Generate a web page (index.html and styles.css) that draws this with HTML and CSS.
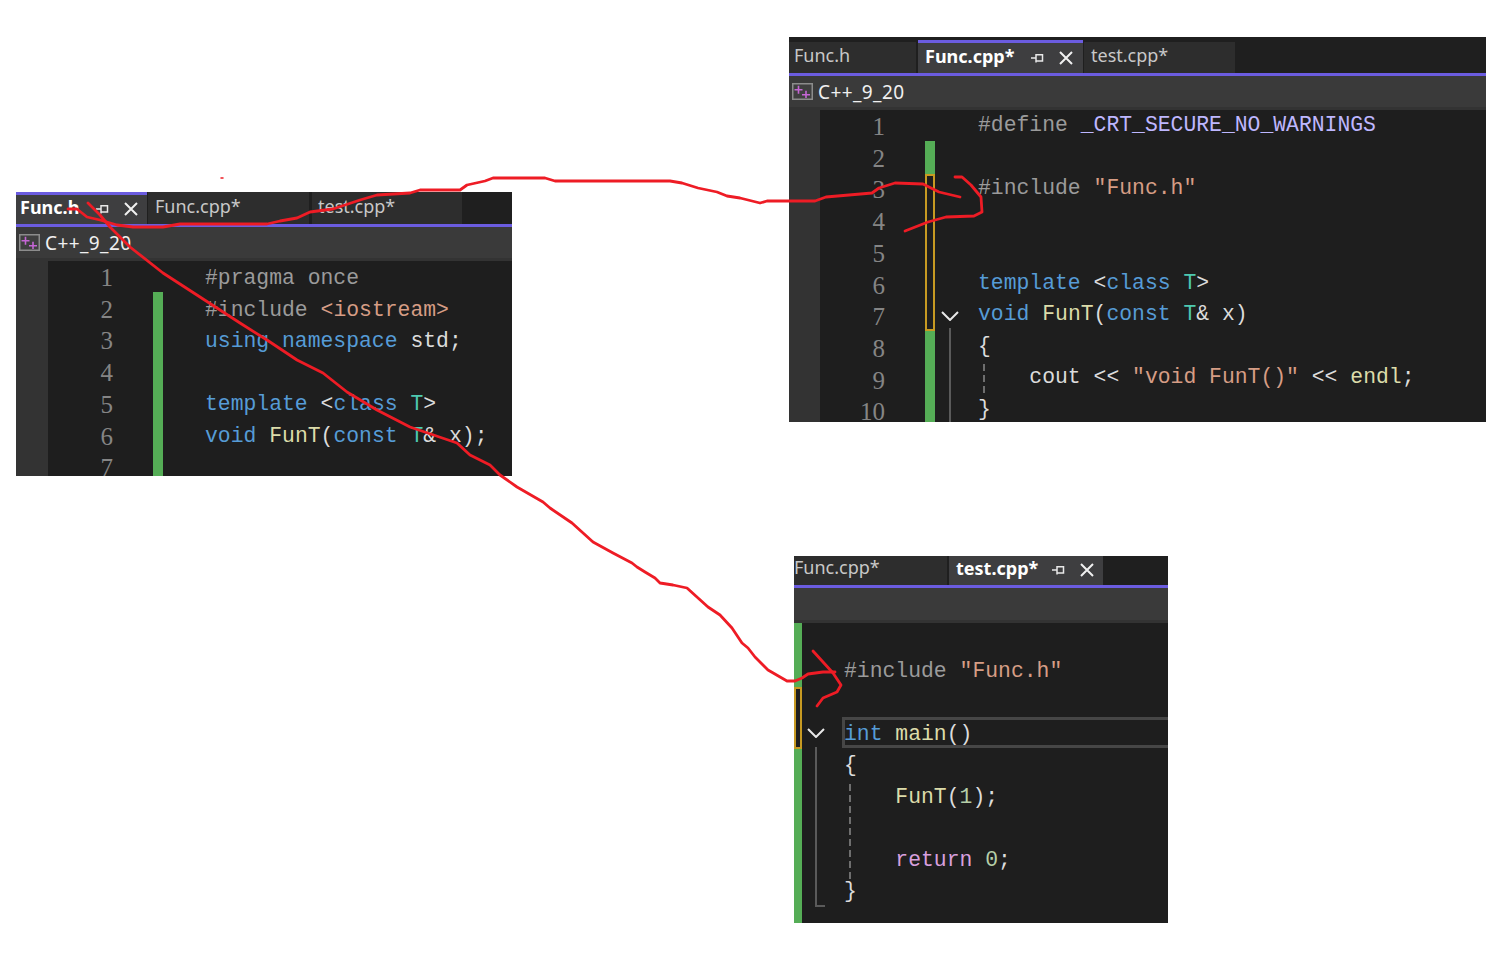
FILE: index.html
```html
<!DOCTYPE html>
<html lang="en">
<head>
<meta charset="utf-8">
<title>C++ template declaration and definition across files</title>
<link rel="stylesheet" href="styles.css">
</head>
<body>
<main class="canvas">

<section class="win win-a">
  <div class="tabs">
    <div class="tab active tab-a1"><span class="name">Func.h</span><span class="tab-icons">
      <svg class="pin" viewBox="0 0 13 10"><path d="M0 5H5M5 1V9.5M5 1.8H11.5V8H5"/></svg>
      <svg class="close" viewBox="0 0 14 14"><path d="M1 1L13 13M13 1L1 13"/></svg></span></div>
    <div class="tab tab-a2"><span class="name">Func.cpp*</span></div>
    <div class="tab tab-a3"><span class="name">test.cpp*</span></div>
  </div>
  <div class="nav"><svg class="proj" viewBox="0 0 21 17"><rect x="0.75" y="0.75" width="19.5" height="15.5"/><path class="plus" d="M6.5 2.7V10.7M2.5 6.7H10.5M14 7.7V15M10 11.7H18"/></svg><span class="proj-name">C++_9_20</span></div>
  <div class="editor">
    <div class="margin"></div>
    <div class="nums nums-a"><div>1</div><div>2</div><div>3</div><div>4</div><div>5</div><div>6</div><div>7</div></div>
    <div class="change change-a"><div class="green grow"></div></div>
    <div class="fold fold-a"></div>
    <pre class="code code-a"><span class="pp">#pragma once</span>
<span class="pp">#include</span> <span class="str">&lt;iostream&gt;</span>
<span class="kw">using namespace</span> <span class="tx">std;</span>

<span class="kw">template</span> <span class="tx">&lt;</span><span class="kw">class</span> <span class="ty">T</span><span class="tx">&gt;</span>
<span class="kw">void</span> <span class="fn">FunT</span><span class="tx">(</span><span class="kw">const</span> <span class="ty">T</span><span class="tx">&amp;</span> <span class="tx">x);</span></pre>
  </div>
</section>

<section class="win win-b">
  <div class="tabs">
    <div class="tab tab-b1"><span class="name">Func.h</span></div>
    <div class="tab active tab-b2"><span class="name">Func.cpp*</span><span class="tab-icons">
      <svg class="pin" viewBox="0 0 13 10"><path d="M0 5H5M5 1V9.5M5 1.8H11.5V8H5"/></svg>
      <svg class="close" viewBox="0 0 14 14"><path d="M1 1L13 13M13 1L1 13"/></svg></span></div>
    <div class="tab tab-b3"><span class="name">test.cpp*</span></div>
  </div>
  <div class="nav"><svg class="proj" viewBox="0 0 21 17"><rect x="0.75" y="0.75" width="19.5" height="15.5"/><path class="plus" d="M6.5 2.7V10.7M2.5 6.7H10.5M14 7.7V15M10 11.7H18"/></svg><span class="proj-name">C++_9_20</span></div>
  <div class="editor">
    <div class="margin"></div>
    <div class="nums nums-b"><div>1</div><div>2</div><div>3</div><div>4</div><div>5</div><div>6</div><div>7</div><div>8</div><div>9</div><div>10</div></div>
    <div class="change change-b"><div class="green seg-b1"></div><div class="saved seg-b2"></div><div class="green grow"></div></div>
    <div class="fold fold-b">
      <svg class="chev chev-b" viewBox="0 0 18 10"><path d="M1 1L9 9L17 1"/></svg>
      <div class="fold-line fold-line-b"></div>
      <div class="guide guide-b"></div>
    </div>
    <pre class="code code-b"><span class="pp">#define</span> <span class="mc">_CRT_SECURE_NO_WARNINGS</span>

<span class="pp">#include</span> <span class="str">"Func.h"</span>


<span class="kw">template</span> <span class="tx">&lt;</span><span class="kw">class</span> <span class="ty">T</span><span class="tx">&gt;</span>
<span class="kw">void</span> <span class="fn">FunT</span><span class="tx">(</span><span class="kw">const</span> <span class="ty">T</span><span class="tx">&amp;</span> <span class="tx">x)</span>
<span class="tx">{</span>
    <span class="tx">cout &lt;&lt;</span> <span class="str">"void FunT()"</span> <span class="tx">&lt;&lt;</span> <span class="fn">endl</span><span class="tx">;</span>
<span class="tx">}</span></pre>
  </div>
</section>

<section class="win win-c">
  <div class="tabs">
    <div class="tab tab-c1"><span class="name">Func.cpp*</span></div>
    <div class="tab active tab-c2"><span class="name">test.cpp*</span><span class="tab-icons">
      <svg class="pin" viewBox="0 0 13 10"><path d="M0 5H5M5 1V9.5M5 1.8H11.5V8H5"/></svg>
      <svg class="close" viewBox="0 0 14 14"><path d="M1 1L13 13M13 1L1 13"/></svg></span></div>
  </div>
  <div class="nav"></div>
  <div class="editor">
    <div class="change change-c"><div class="green seg-c1"></div><div class="saved seg-c2"></div><div class="green grow"></div></div>
    <div class="fold fold-c">
      <svg class="chev chev-c" viewBox="0 0 18 10"><path d="M1 1L9 9L17 1"/></svg>
      <div class="fold-line fold-line-c"></div>
      <div class="guide guide-c"></div>
    </div>
    <div class="current"></div>
    <pre class="code code-c">

<span class="pp">#include</span> <span class="str">"Func.h"</span>

<span class="kw">int</span> <span class="fn">main</span><span class="tx">()</span>
<span class="tx">{</span>
    <span class="fn">FunT</span><span class="tx">(</span><span class="num">1</span><span class="tx">);</span>

    <span class="ctl">return</span> <span class="num">0</span><span class="tx">;</span>
<span class="tx">}</span></pre>
  </div>
</section>

<svg class="ink" viewBox="0 0 1509 970">
  <path d="M68 209L77 209L87 217L100 220L117 225L133 227L163 227L180 224L267 224L280 221L297 218L310 212L333 209L360 200L377 195L410 193L420 190L460 190L467 185L485 181L493 178L545 178L555 181L670 181L682 183L698 188L717 192L727 196L740 198L760 203L767 201L815 201L826 197L872 193L879 188L895 183L923 184L939 192L960 197"/>
  <path d="M955 177L962 177L971 185L981 197L982 212L974 216L946 217L928 222L905 231"/>
  <path d="M88 203L100 215L110 227L130 247L163 273L200 297L240 323L267 340L297 360L323 373L347 392L377 410L410 427L457 443L470 455L490 465L500 475L517 487L543 502L550 508L572 523L593 542L613 553L632 563L637 567L645 572L655 578L660 583L673 585L687 588L708 607L720 615L732 628L742 643L748 648L755 657L768 670L787 681L795 681L802 678L808 674L823 672L835 672"/>
  <path d="M813 651L823 662L833 673L841 685L837 692L823 698L817 706"/>
  <path class="dot" d="M221 178H223"/>
</svg>

</main>
</body>
</html>
```

FILE: styles.css
```css
* { box-sizing: border-box; }
html, body { margin: 0; padding: 0; background: #fff; }
.canvas { position: relative; width: 1509px; height: 970px; overflow: hidden; }

.win { position: absolute; display: flex; flex-direction: column; overflow: hidden; background: #1e1e1e; }
.win-a { left: 16px; top: 192px; width: 496px; height: 284px; }
.win-b { left: 789px; top: 37px; width: 697px; height: 385px; }
.win-c { left: 794px; top: 556px; width: 374px; height: 367px; }

.tabs { display: flex; align-items: flex-end; background: #1f1f1f; border-bottom: 3px solid #6b5ce0; flex: none; }
.win-a .tabs { height: 35px; }
.win-b .tabs { height: 39px; }
.win-c .tabs { height: 32px; }

.tab { height: 100%; display: flex; align-items: center; color: #c8c8c8; background: #2d2d2d; font: 18px/1 "Noto Sans", "Open Sans", sans-serif; flex: none; margin-right: 3px; white-space: nowrap; }
.win-b .tab { height: 31px; }
.tab.active { background: #3e3e40; color: #fff; font-weight: 700; border-top: 3px solid #6b5ce0; }
.win-c .tab.active { border-top: 0; }
.tab-icons { display: flex; align-items: center; margin-left: auto; }
.pin { width: 13px; height: 10px; flex: none; fill: none; stroke: #e8e8e8; stroke-width: 1.5; }
.close { width: 14px; height: 14px; flex: none; margin-left: 15px; fill: none; stroke: #f0f0f0; stroke-width: 2; }

.tab-a1 { width: 131px; padding: 0 9px 5px 4px; margin-right: 1px; }
.tab-a1 .tab-icons { margin-bottom: -4px; }
.tab-a2 { width: 161px; padding: 0 0 4px 7px; }
.tab-a3 { width: 150px; padding: 0 0 4px 6px; }
.tab-b1 { width: 127px; padding: 0 0 5px 5px; margin-right: 2px; }
.win-b .tab-b2 { width: 165px; height: 33px; padding: 0 10px 4px 7px; margin-right: 1px; }
.tab-b2 .tab-icons { margin-bottom: -4px; }
.tab-b3 { width: 151px; padding: 0 0 5px 7px; }
.tab-c1 { width: 153px; padding: 0 0 7px 0; margin-right: 2px; }
.tab-c2 { width: 154px; padding: 0 9px 5px 7px; }
.tab-c2 .tab-icons { margin-bottom: -3px; }

.nav { flex: none; height: 34px; background: #3a3a3a; border-bottom: 3px solid #333; display: flex; align-items: center; padding: 0 0 0 3px; color: #f0f0f0; }
.win-c .nav { height: 35px; }
.proj { width: 21px; height: 17px; flex: none; }
.proj rect { fill: #3f3f3f; stroke: #8c8c8c; stroke-width: 1.5; }
.plus { fill: none; stroke: #c566d5; stroke-width: 1.6; }
.proj-name { margin-left: 5px; padding-top: 2px; font: 19px/1 "Noto Sans", sans-serif; letter-spacing: .4px; }

.editor { position: relative; flex: 1; display: flex; min-height: 0; overflow: hidden; font: 21.4px/31.5px "Liberation Mono", "DejaVu Sans Mono", monospace; }
.margin { flex: none; width: 32px; background: #333; }
.win-b .margin { width: 31px; }

.nums { flex: none; text-align: right; color: #858585; padding-top: 1px; font: 25px/31.7px "Liberation Serif", serif; }
.nums-a { width: 65px; height: 230px; }
.nums-b { width: 65px; }

.change { flex: none; display: flex; flex-direction: column; }
.change-a { width: 10px; margin-left: 40px; padding-top: 31px; }
.change-b { width: 10px; margin-left: 40px; padding-top: 31px; }
.change-c { width: 8px; }
.green { background: #55ad56; }
.grow { flex: 1; }
.saved { border: 2px solid #c79a22; background: #1e1e1e; }
.seg-b1 { height: 33px; }
.seg-b2 { height: 157px; }
.seg-c1 { height: 64px; }
.seg-c2 { height: 62px; }

.fold { flex: none; position: relative; }
.fold-a { width: 42px; }
.fold-b { width: 43px; }
.fold-c { width: 42px; }
.chev { position: absolute; width: 18px; height: 10px; fill: none; stroke: #e8e8e8; stroke-width: 2; }
.chev-b { left: 6px; top: 201px; }
.chev-c { left: 5px; top: 105px; }
.fold-line { position: absolute; width: 2px; background: #5a5a5a; }
.fold-line-b { left: 14px; top: 218px; bottom: 0; }
.fold-line-c { left: 13px; top: 124px; height: 160px; }
.fold-line-c::after { content: ""; position: absolute; left: 0; bottom: 0; width: 10px; height: 2px; background: #5a5a5a; }
.guide { position: absolute; width: 2px; background: repeating-linear-gradient(to bottom, #6e6e6e 0 7px, transparent 7px 11px); }
.guide-b { left: 48px; top: 254px; height: 30px; }
.guide-c { left: 47px; top: 161px; height: 95px; }

.current { position: absolute; left: 48px; right: 0; top: 94px; height: 31px; border: 3px solid #464646; border-right: 0; }

.code { margin: 0; font: inherit; color: #dcdcdc; white-space: pre; }
.code-a { padding-top: 2px; }
.code-c { padding-top: 1px; }

.pp { color: #9b9b9b; }
.kw { color: #569cd6; }
.str { color: #d69d85; }
.tx { color: #dcdcdc; }
.ty { color: #4ec9b0; }
.fn { color: #dcdcaa; }
.mc { color: #beb7ff; }
.ctl { color: #d8a0df; }
.num { color: #b5cea8; }

.ink { position: absolute; left: 0; top: 0; width: 1509px; height: 970px; pointer-events: none; }
.ink path { fill: none; stroke: #ee1c25; stroke-width: 2.8; stroke-linecap: round; stroke-linejoin: round; }
.ink .dot { stroke-width: 1.5; }
```
